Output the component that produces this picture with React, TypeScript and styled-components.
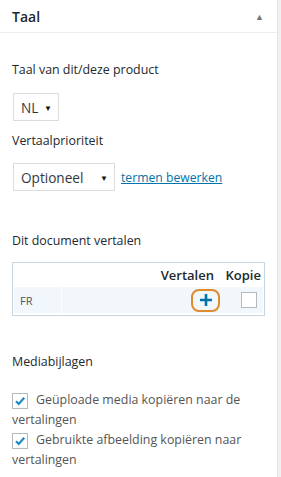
import React from 'react';
import styled, { createGlobalStyle } from 'styled-components';

const GlobalStyle = createGlobalStyle`
  html, body {
    margin: 0;
    padding: 0;
    background: #f1f1f1;
  }
  body {
    font-family: 'Open Sans', 'Noto Sans', sans-serif;
    font-size: 12.4px;
    color: #444;
  }
`;

const Panel = styled.div`
  width: 278px;
  min-height: 477px;
  background: #fff;
  border-right: 1px solid #e5e5e5;
  box-sizing: border-box;
`;

const Header = styled.div`
  height: 32px;
  padding: 0 12px;
  display: flex;
  align-items: center;
  justify-content: space-between;
  border-bottom: 1px solid #eee;
`;

const Title = styled.h2`
  margin: 0;
  font-size: 14px;
  font-weight: 600;
  color: #23282d;
`;

const Toggle = styled.span`
  font-size: 9px;
  color: #72777c;
  margin-right: 1px;
`;

const Body = styled.div`
  padding: 0 12px 20px;
`;

const Label = styled.p<{ $top: number }>`
  margin: ${(p) => p.$top}px 0 0;
  line-height: 20px;
  font-size: 12.4px;
  color: #23282d;
`;

const Row = styled.div<{ $top: number }>`
  display: flex;
  align-items: center;
  gap: 6px;
  margin-top: ${(p) => p.$top}px;
`;

const Select = styled.div<{ $width: number }>`
  width: ${(p) => p.$width}px;
  height: 28px;
  margin-left: 1px;
  box-sizing: border-box;
  border: 1px solid #ddd;
  padding: 0 6px 0 7px;
  display: flex;
  align-items: center;
  justify-content: space-between;
  font-size: 13.6px;
  color: #32373c;
  background: #fff;
`;

const Arrow = styled.span`
  font-size: 8px;
  color: #111;
`;

const Link = styled.a`
  color: #0073aa;
  text-decoration: underline;
  font-size: 12.2px;
`;

const Table = styled.div`
  margin-top: 11px;
  border: 1px solid #c9d6df;
  padding: 0 1px 2px;
  display: grid;
  grid-template-columns: 48px 1fr 66px 42px;
`;

const HeadCell = styled.div<{ $align?: string; $pad?: number }>`
  height: 24px;
  display: flex;
  align-items: center;
  justify-content: ${(p) => p.$align || 'center'};
  padding-right: ${(p) => p.$pad || 0}px;
  font-size: 13px;
  font-weight: 600;
  color: #23282d;
`;

const Cell = styled.div<{ $align?: string; $pad?: number; $split?: boolean }>`
  height: 26px;
  background: #f2f7fb;
  display: flex;
  align-items: center;
  justify-content: ${(p) => p.$align || 'center'};
  padding: 0 ${(p) => p.$pad || 0}px;
  border-right: ${(p) => (p.$split ? '1px solid #fff' : '0')};
  font-size: 11px;
  color: #555;
`;

const AddButton = styled.span`
  width: 25px;
  height: 19px;
  border: 2px solid #e08a2e;
  border-radius: 8px;
  display: flex;
  align-items: center;
  justify-content: center;
  margin-right: 1px;
`;

const Box = styled.span`
  width: 16px;
  height: 16px;
  box-sizing: border-box;
  border: 1px solid #b4b9be;
  background: #fff;
  display: inline-flex;
  align-items: center;
  justify-content: center;
  flex-shrink: 0;
`;

const CheckList = styled.div`
  margin-top: 18px;
`;

const CheckLine = styled.div`
  line-height: 20px;
  font-size: 12.4px;
  color: #555;

  ${Box} {
    vertical-align: -3px;
    margin-right: 8px;
  }
`;

const Check = () => (
  <Box>
    <svg width="12" height="12" viewBox="0 0 12 12">
      <path d="M2 6.2 L4.8 9 L10.2 2.8" fill="none" stroke="#1e8cbe" strokeWidth="2.2" />
    </svg>
  </Box>
);

const App: React.FC = () => {
  return (
    <>
      <GlobalStyle />
      <Panel>
        <Header>
          <Title>Taal</Title>
          <Toggle>▲</Toggle>
        </Header>
        <Body>
          <Label $top={27}>Taal van dit/deze product</Label>
          <Row $top={13}>
            <Select $width={46}>
              NL <Arrow>▼</Arrow>
            </Select>
          </Row>
          <Label $top={10}>Vertaalprioriteit</Label>
          <Row $top={12}>
            <Select $width={102}>
              Optioneel <Arrow>▼</Arrow>
            </Select>
            <Link href="#">termen bewerken</Link>
          </Row>
          <Label $top={40}>Dit document vertalen</Label>
          <Table>
            <HeadCell />
            <HeadCell />
            <HeadCell $align="flex-end" $pad={7}>Vertalen</HeadCell>
            <HeadCell $align="flex-end" $pad={2}>Kopie</HeadCell>
            <Cell $align="flex-start" $pad={6} $split>
              FR
            </Cell>
            <Cell />
            <Cell $align="flex-end">
              <AddButton>
                <svg width="14" height="14" viewBox="0 0 14 14">
                  <path d="M7 1 V13 M1 7 H13" stroke="#0073aa" strokeWidth="2.6" />
                </svg>
              </AddButton>
            </Cell>
            <Cell $align="flex-end" $pad={6}>
              <Box />
            </Cell>
          </Table>
          <Label $top={36}>Mediabijlagen</Label>
          <CheckList>
            <CheckLine>
              <Check />
              Geüploade media kopiëren naar de vertalingen
            </CheckLine>
            <CheckLine>
              <Check />
              Gebruikte afbeelding kopiëren naar vertalingen
            </CheckLine>
          </CheckList>
        </Body>
      </Panel>
    </>
  );
};

export default App;
